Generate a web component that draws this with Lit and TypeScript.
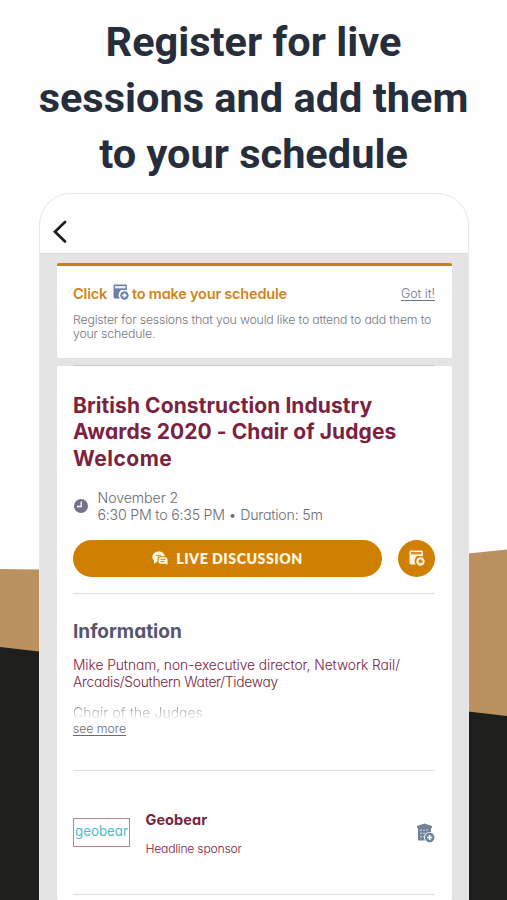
import { LitElement, html, css, svg } from "lit";
import { customElement, property } from "lit/decorators.js";

@customElement("schedule-icon")
export class ScheduleIcon extends LitElement {
  static styles = css`
    :host { display: inline-flex; }
    svg { display: block; width: 100%; height: 100%; }
  `;
  render() {
    return html`<svg viewBox="0 0 30 30" fill="none">
      <path d="M3 1h21a2 2 0 0 1 2 2v11a8.500 8.500 0 0 0-13 13H3a2 2 0 0 1-2-2V3a2 2 0 0 1 2-2z" fill="currentColor"/>
      <path d="M3.500 3.800h20v4.400h-20z" fill="var(--hole, #fff)" opacity=".85"/>
      <path d="M14 11.500h12v3q-8 0-11 5h-1z" fill="var(--hole, #fff)"/>
      <circle cx="21.500" cy="21.500" r="9" fill="var(--hole, #fff)"/>
      <circle cx="21.500" cy="21.500" r="7.800" fill="currentColor"/>
      <path d="M21.500 17.500v8M17.500 21.500h8" stroke="var(--hole, #fff)" stroke-width="3.400"/>
    </svg>`;
  }
}

@customElement("notice-card")
export class NoticeCard extends LitElement {
  static styles = css`
    :host {
      display: block; box-sizing: border-box; height: 95px; margin: 0 16px 0 17px;
      padding: 18px 17px 0 16px; background: #fff; border-top: 3px solid #cb7e1c;
      border-radius: 2px;
    }
    .head { display: flex; height: 20px; line-height: 20px; white-space: pre; }
    .lead { display: flex; flex: 1; font-size: 14.500px; font-weight: 600; color: #cf8419; }
    .click { width: 40px; letter-spacing: -0.150px; }
    .rest { letter-spacing: -0.210px; margin-left: 3px; }
    schedule-icon { width: 16px; height: 16px; color: #6b80a6; }
    .got { font-size: 12.500px; font-weight: 300; color: #6c7684; text-decoration: underline; text-underline-offset: 2px; }
    .body { margin-top: 8.500px; font-size: 12.300px; font-weight: 300; line-height: 14.500px; letter-spacing: -0.180px; color: #77777d; white-space: pre; }
  `;
  render() {
    return html`
      <div class="head">
        <div class="lead"><span class="click">Click</span><schedule-icon></schedule-icon><span class="rest">to make your schedule</span></div>
        <span class="got">Got it!</span>
      </div>
      <div class="body"><div>Register for sessions that you would like to attend to add them to</div><div>your schedule.</div></div>`;
  }
}

@customElement("sponsor-row")
export class SponsorRow extends LitElement {
  @property() name = "";
  @property() level = "";
  static styles = css`
    :host { display: flex; align-items: center; height: 123px; padding-top: 1px; box-sizing: border-box; }
    .logo {
      box-sizing: border-box; width: 57px; height: 29px; border: 1px solid #b58494;
      display: flex; align-items: center; justify-content: center; margin-right: 15.500px;
    }
    .logo svg { width: 55px; height: 20px; display: block; overflow: visible; }
    .wordmark { font: 400 14px "Inter", sans-serif; font-feature-settings: "cv11"; fill: #4bbccb; }
    .text { flex: 1; color: #7b2240; padding-top: 3px; }
    .name { font-size: 14.500px; line-height: 18px; font-weight: 700; letter-spacing: 0.050px; }
    .level { margin-top: 11.500px; font-size: 12.200px; font-weight: 300; line-height: 16px; letter-spacing: -0.250px; color: #7b2240; }
    .add { width: 19px; height: 20px; color: #70839b; }
  `;
  render() {
    const windows = [0, 1, 2].flatMap((r) =>
      [0, 1, 2].map((c) => svg`<rect x=${4.4 + c * 3} y=${6.4 + r * 3.3} width="1.300" height="1.400" fill="#fff" opacity=".8"/>`));
    return html`
      <div class="logo"><svg viewBox="0 0 55 20"><text class="wordmark" x="1" y="13" textLength="53" lengthAdjust="spacingAndGlyphs">geobear</text></svg></div>
      <div class="text"><div class="name">${this.name}</div><div class="level">${this.level}</div></div>
      <svg class="add" viewBox="0 0 19 20" fill="none">
        <path d="M1 3L8.500 .500L16 3v2H15v11H9.500v1.500H2V5H1z" fill="currentColor"/>
        ${windows}
        <circle cx="13.700" cy="14.500" r="5.600" fill="#fff"/>
        <circle cx="13.700" cy="14.500" r="4.800" fill="currentColor"/>
        <path d="M13.700 12v5M11.200 14.500h5" stroke="#fff" stroke-width="1.700"/>
      </svg>`;
  }
}

@customElement("session-card")
export class SessionCard extends LitElement {
  static styles = css`
    :host { display: block; flex: 1; margin: 8px 16px 0 17px; padding: 0 17px 0 16px; background: #fff; border-radius: 2px; }
    .edge { height: 1px; margin-top: -1px; background: #c9c9cb; }
    .title { margin: 26.500px 0 0; font-size: 21px; line-height: 26.700px; font-weight: 700; letter-spacing: 0.080px; color: #7b2240; white-space: pre; }
    .last { letter-spacing: 0.500px; }
    .when { display: flex; align-items: center; margin-top: 16px; font-size: 14.200px; font-weight: 300; line-height: 17px; letter-spacing: -0.100px; color: #6c6c74; white-space: pre; }
    .when svg { width: 14px; height: 14px; margin: 0 9.500px 0 1px; }
    .time { letter-spacing: -0.220px; }
    .actions { display: flex; gap: 16px; margin-top: 17px; }
    .live {
      flex: 1; height: 37px; border-radius: 19px; background: #d17f00; color: #fff6e2;
      display: flex; align-items: center; justify-content: center; gap: 8px;
      font: 800 14.200px "Lato", sans-serif; letter-spacing: 0.500px;
    }
    .live svg { width: 16px; height: 15px; }
    .add {
      width: 37px; height: 37px; border-radius: 50%; background: #d17f00; color: #fff6e2;
      display: flex; align-items: center; justify-content: center; --hole: #d17f00;
    }
    .add schedule-icon { width: 16px; height: 16px; }
    .rule { height: 1px; background: #e0e0e3; margin-top: 16px; }
    h2 { margin: 26.500px 0 0; font-size: 19px; line-height: 24px; font-weight: 700; color: #57566d; }
    .people { margin-top: 12.500px; font-size: 13.800px; font-weight: 300; line-height: 17.500px; letter-spacing: -0.060px; color: #7b2240; white-space: pre; }
    .tight { letter-spacing: -0.270px; }
    .cut {
      margin-top: 13.500px; height: 13px; overflow: hidden; font-size: 13.800px; font-weight: 300; line-height: 17.500px;
      letter-spacing: 0.150px; color: #99999e;
      mask-image: linear-gradient(#000 20%, rgba(0, 0, 0, .2));
    }
    .more { margin-top: 2.500px; font-size: 12.300px; font-weight: 300; line-height: 16px; letter-spacing: -0.050px; color: #6c6c74; text-decoration: underline; text-underline-offset: 2px; }
    .spaced { margin-top: 33px; }
    .flush { margin-top: 0; }
  `;
  render() {
    return html`
      <div class="edge"></div>
      <div class="title"><div>British Construction Industry</div><div>Awards 2020 - Chair of Judges</div><div class="last">Welcome</div></div>
      <div class="when">
        <svg viewBox="0 0 14 14" fill="none"><circle cx="7" cy="7" r="7" fill="#74738a"/><path d="M7.200 2.500v5H3" stroke="#fff" stroke-width="1.300"/></svg>
        <div><div>November 2</div><div class="time">6:30 PM to 6:35 PM • Duration: 5m</div></div>
      </div>
      <div class="actions">
        <div class="live">
          <svg viewBox="0 0 16 15" fill="none">
            <path d="M6.500 .500c3.500 0 6 2 6.300 4.700H8.500a3 3 0 0 0-3 3v2.500H5L2 13V9.500C.800 8.500.300 7.300.300 6 .300 3 3 .500 6.500.500z" fill="currentColor"/>
            <path d="M8.500 6.200h5a2 2 0 0 1 2 2v5.800l-2-1.300h-5a2 2 0 0 1-2-2V8.200a2 2 0 0 1 2-2z" fill="currentColor"/>
            <path d="M8.500 8.400h5M8.500 10.500h4M4 4.600h5" stroke="#d17f00" stroke-width=".9"/>
          </svg>
          LIVE DISCUSSION
        </div>
        <div class="add"><schedule-icon></schedule-icon></div>
      </div>
      <div class="rule"></div>
      <h2>Information</h2>
      <div class="people"><div>Mike Putnam, non-executive director, Network Rail/</div><div class="tight">Arcadis/Southern Water/Tideway</div></div>
      <div class="cut">Chair of the Judges</div>
      <div class="more">see more</div>
      <div class="rule spaced"></div>
      <sponsor-row name="Geobear" level="Headline sponsor"></sponsor-row>
      <div class="rule flush"></div>`;
  }
}

@customElement("app-root")
export class AppRoot extends LitElement {
  static styles = css`
    :host {
      display: flex; flex-direction: column; position: relative; height: 900px; overflow: hidden;
      box-sizing: border-box; background: #fefefe;
      font-family: "Inter", sans-serif; font-feature-settings: "cv11";
    }
    .backdrop { position: absolute; inset: 0; width: 507px; height: 900px; }
    h1 {
      position: relative; margin: 13.500px 0 0; height: 179.500px; text-align: center;
      font: 700 41.500px/56px "Roboto", sans-serif; color: #262d3b; white-space: pre;
    }
    .phone {
      position: relative; flex: 1; box-sizing: border-box; margin: 0 38px 0 39px; display: flex; flex-direction: column;
      border: 1px solid #e8e8e8; border-bottom: 0; border-radius: 32px 32px 0 0; background: #e4e4e4; overflow: hidden;
    }
    .bar { height: 60px; background: #fff; border-bottom: 1px solid #dcdcdc; box-sizing: border-box; padding: 26px 0 0 12.500px; }
    .bar svg { display: block; width: 14px; height: 23px; }
    notice-card { margin-top: 9px; }
  `;
  render() {
    return html`
      <svg class="backdrop" viewBox="0 0 507 900">
        <path d="M0 569L39 569.500H468V553.500L507 549.500V900H0z" fill="#bc9160"/>
        <path d="M0 647L39 651.500H468V711.500L507 716V900H0z" fill="#1e1e1c"/>
      </svg>
      <h1><div>Register for live</div><div>sessions and add them</div><div>to your schedule</div></h1>
      <div class="phone">
        <div class="bar"><svg viewBox="0 0 14 23" fill="none" stroke="#202024" stroke-width="2.700" stroke-linecap="round"><path d="M12 2L2 11.700L12 21.500"/></svg></div>
        <notice-card></notice-card>
        <session-card></session-card>
      </div>`;
  }
}
